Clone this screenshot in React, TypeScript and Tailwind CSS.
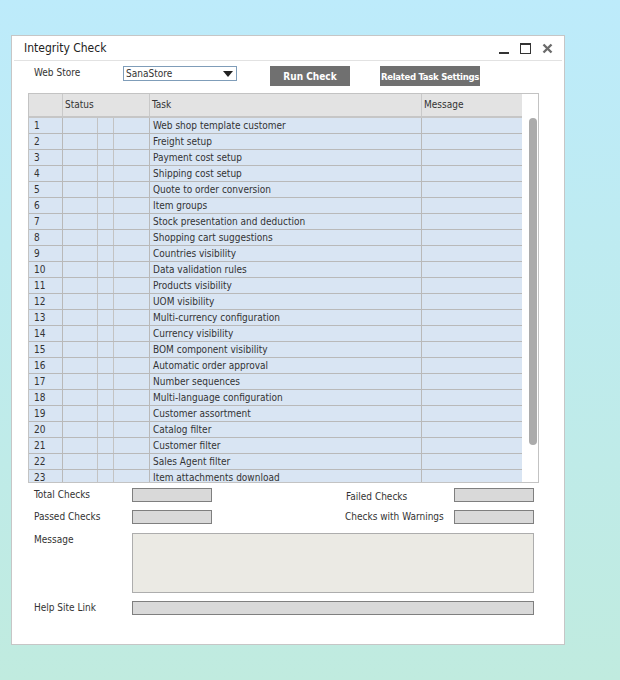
import React from 'react';

const tasks = [
  'Web shop template customer',
  'Freight setup',
  'Payment cost setup',
  'Shipping cost setup',
  'Quote to order conversion',
  'Item groups',
  'Stock presentation and deduction',
  'Shopping cart suggestions',
  'Countries visibility',
  'Data validation rules',
  'Products visibility',
  'UOM visibility',
  'Multi-currency configuration',
  'Currency visibility',
  'BOM component visibility',
  'Automatic order approval',
  'Number sequences',
  'Multi-language configuration',
  'Customer assortment',
  'Catalog filter',
  'Customer filter',
  'Sales Agent filter',
  'Item attachments download',
];

const Field: React.FC<{ className?: string }> = ({ className = 'w-[80px]' }) => (
  <div className={`h-[14px] bg-[#d9d9d9] border border-[#7f7f7f] ${className}`} />
);

const App: React.FC = () => {
  return (
    <div className="min-h-[680px] w-[620px] bg-linear-to-b from-[#bdebfb] to-[#c0ebdf] pt-[35px] pl-[11px] font-['DejaVu_Sans_Condensed','Liberation_Sans',sans-serif] text-[10px] leading-[14px] text-[#333]">
      <div className="w-[554px] h-[610px] bg-white border border-[#c6c6c6] flex flex-col">
        {/* Title bar */}
        <div className="h-[25px] mx-[2px] border-b border-[#e2e2e2] flex items-center pl-[10px] pr-[9px]">
          <span className="text-[12px] text-[#222]">Integrity Check</span>
          <div className="ml-auto flex items-center gap-[11px]">
            <span className="w-[10px] h-[2px] bg-[#333] mt-[9px]" />
            <span className="w-[11px] h-[11px] border border-[#333] border-t-2" />
            <svg width="11" height="11" viewBox="0 0 11 11">
              <path d="M1.5 1.5 L9.5 9.5 M9.5 1.5 L1.5 9.5" stroke="#6b6b6b" strokeWidth="2.4" />
            </svg>
          </div>
        </div>

        {/* Web store row */}
        <div className="flex items-start mt-[5px] pl-[22px]">
          <span className="w-[89px]">Web Store</span>
          <div className="w-[114px] h-[15px] border border-[#7f9db9] flex items-center pl-[2px] pr-[3px] leading-none">
            <span>SanaStore</span>
            <svg className="ml-auto" width="10" height="6" viewBox="0 0 10 6">
              <path d="M0 0 H10 L5 6 Z" fill="#222" />
            </svg>
          </div>
          <button className="ml-[33px] w-[80px] h-[20px] pt-[2px] bg-[#707070] text-white font-bold text-[10px] whitespace-nowrap">Run Check</button>
          <button className="ml-[30px] w-[100px] h-[20px] pt-[2px] bg-[#707070] text-white font-bold text-[9.5px] whitespace-nowrap tracking-[-0.3px]">Related Task Settings</button>
        </div>

        {/* Grid */}
        <div className="ml-[16px] mt-[7px] w-[511px] h-[390px] border border-[#c3c3c3] flex">
          <div className="w-[493px] flex flex-col">
            <div className="h-[24px] bg-[#e3e3e3] border-b-2 border-[#c6c6c6] flex shrink-0">
              <div className="w-[34px] border-r border-[#c9c9c9]" />
              <div className="w-[87px] border-r border-[#c9c9c9] pl-[2px] flex items-center">Status</div>
              <div className="w-[272px] border-r border-[#c9c9c9] pl-[2px] flex items-center">Task</div>
              <div className="w-[100px] pl-[2px] flex items-center">Message</div>
            </div>
            <div className="h-[364px] overflow-hidden">
              {tasks.map((task, i) => (
                <div key={i} className="h-[16px] bg-[#d9e5f3] border-b border-[#b9b9b9] flex">
                  <div className="w-[34px] border-r border-[#b9b9b9] pl-[5px] pt-[1px] flex items-center">{i + 1}</div>
                  <div className="w-[87px] border-r border-[#b9b9b9] flex">
                    <div className="ml-[34px] w-[17px] border-x border-[#c3c3c3]" />
                  </div>
                  <div className="w-[272px] border-r border-[#b9b9b9] pl-[3px] pt-[1px] flex items-center whitespace-nowrap">{task}</div>
                  <div className="w-[100px]" />
                </div>
              ))}
            </div>
          </div>
          <div className="w-[16px] pt-[24px] pl-[7px]">
            <div className="w-[8px] h-[327px] bg-[#ababab] rounded-[4px]" />
          </div>
        </div>

        {/* Summary */}
        <div className="pl-[22px] mt-[5px] flex items-start">
          <span className="w-[98px]">Total Checks</span>
          <Field />
          <span className="ml-[134px] w-[108px] pt-[2px]">Failed Checks</span>
          <Field />
        </div>
        <div className="pl-[22px] mt-[6px] flex items-start">
          <span className="w-[98px]">Passed Checks</span>
          <Field />
          <span className="ml-[133px] w-[109px]">Checks with Warnings</span>
          <Field />
        </div>
        <div className="pl-[22px] mt-[9px] flex items-start">
          <span className="w-[98px]">Message</span>
          <div className="w-[402px] h-[60px] bg-[#ebeae4] border border-[#adadad]" />
        </div>
        <div className="pl-[22px] mt-[8px] flex items-start">
          <span className="w-[98px]">Help Site Link</span>
          <Field className="w-[402px]" />
        </div>
      </div>
    </div>
  );
};

export default App;
